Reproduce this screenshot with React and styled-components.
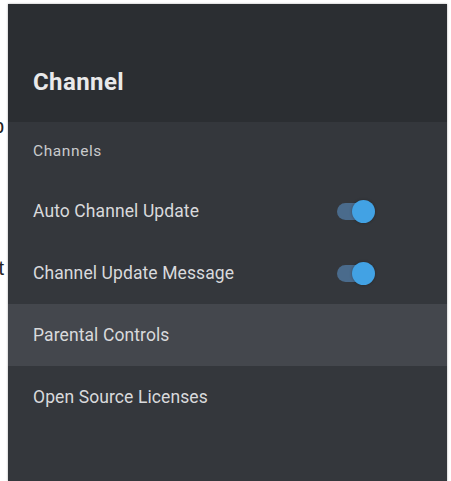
import React from "react";
import styled, { createGlobalStyle } from "styled-components";

const Global = createGlobalStyle`
  html, body { margin: 0; padding: 0; background: #ffffff; }
  body { font-family: Roboto, "Noto Sans", "Liberation Sans", sans-serif; }
  * { box-sizing: border-box; }
`;

const Page = styled.div`
  display: flex;
  width: 451px;
  height: 481px;
  overflow: hidden;
  background: #ffffff;
`;

const BehindStrip = styled.div`
  width: 8px;
  flex: none;
  overflow: hidden;
  display: flex;
  flex-direction: column;
  align-items: flex-end;
  padding-right: 4px;
  color: #222;
  font-size: 20px;
  font-family: "Liberation Sans", Arial, sans-serif;
  line-height: 20px;
`;

const BehindChar = styled.span`
  display: block;
  margin-top: ${(p) => p.$top}px;
`;

const Panel = styled.div`
  width: 439px;
  flex: none;
  margin-top: 4px;
  display: flex;
  flex-direction: column;
  background: #33363b;
  box-shadow: 0 0 2px rgba(0, 0, 0, 0.35);
`;

const Header = styled.div`
  height: 118px;
  padding: 62px 25px 0;
  background: #2b2e32;
`;

const Title = styled.h1`
  margin: 0;
  font-size: 24px;
  line-height: 32px;
  font-weight: 700;
  color: #e9e9ea;
  letter-spacing: 0.4px;
`;

const List = styled.div`
  display: flex;
  flex-direction: column;
  flex: 1;
  background: #34373c;
`;

const Category = styled.div`
  height: 58px;
  display: flex;
  align-items: center;
  padding: 0 25px;
  font-size: 15.5px;
  color: #c9cacc;
  letter-spacing: 0.6px;
`;

const Row = styled.div`
  height: 62px;
  display: flex;
  align-items: center;
  justify-content: space-between;
  padding: 0 72px 0 25px;
  background: ${(p) => (p.$focused ? "#44474d" : "transparent")};
`;

const Label = styled.span`
  font-size: 17.5px;
  color: #d9dadc;
  letter-spacing: 0.1px;
`;

const Switch = styled.div`
  position: relative;
  width: 38px;
  height: 23px;
  display: flex;
  align-items: center;
`;

const Track = styled.div`
  width: 30px;
  height: 17px;
  border-radius: 9px;
  background: #4a6b8c;
`;

const Thumb = styled.div`
  position: absolute;
  right: 0;
  top: 0;
  width: 23px;
  height: 23px;
  border-radius: 50%;
  background: #42a2e4;
  box-shadow: 0 0 3px rgba(0, 0, 0, 0.3);
`;

const Toggle = () => (
  <Switch>
    <Track />
    <Thumb />
  </Switch>
);

export default function App() {
  return (
    <>
      <Global />
      <Page>
        <BehindStrip>
          <BehindChar $top={116}>p</BehindChar>
          <BehindChar $top={122}>t</BehindChar>
        </BehindStrip>
        <Panel>
          <Header>
            <Title>Channel</Title>
          </Header>
          <List>
            <Category>Channels</Category>
            <Row>
              <Label>Auto Channel Update</Label>
              <Toggle />
            </Row>
            <Row>
              <Label>Channel Update Message</Label>
              <Toggle />
            </Row>
            <Row $focused>
              <Label>Parental Controls</Label>
            </Row>
            <Row>
              <Label>Open Source Licenses</Label>
            </Row>
          </List>
        </Panel>
      </Page>
    </>
  );
}
